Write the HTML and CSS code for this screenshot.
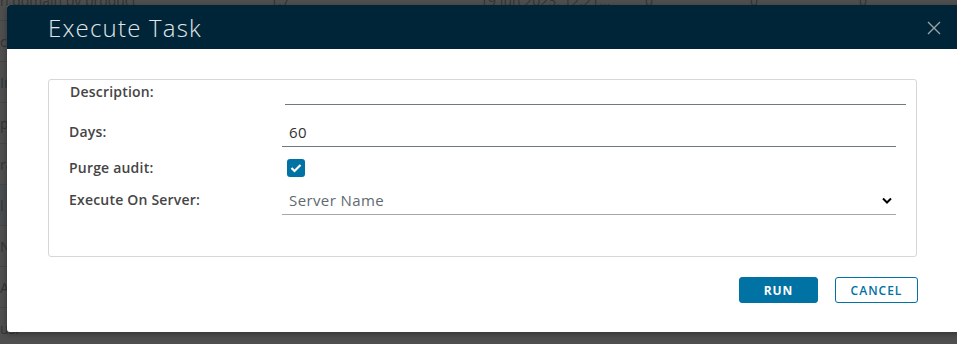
FILE: index.html
```html
<!DOCTYPE html>
<html lang="en">
<head>
  <meta charset="UTF-8" />
  <title>Execute Task</title>
  <link rel="stylesheet" href="styles.css">
</head>
<body>
  <!-- page behind the dialog, dimmed -->
  <div class="backdrop">
    <div class="bg-row"><span class="c1">n domain by product</span><span class="c2">1.7</span><span class="c3">19 Jun 2023, 12:21...</span><span class="c4">0</span><span class="c5">0</span><span class="c6">0</span></div>
    <div class="bg-row"><span class="c1">cleanup</span></div>
    <div class="bg-row"><span class="c1 link">Index</span></div>
    <div class="bg-row"><span class="c1">purge</span></div>
    <div class="bg-row"><span class="c1">rank</span></div>
    <div class="bg-row selected"><span class="c1 link">l</span></div>
    <div class="bg-row"><span class="c1">Notify</span></div>
    <div class="bg-row"><span class="c1">Audit</span></div>
    <div class="bg-row"><span class="c1">usr</span></div>
  </div>

  <div class="modal">
    <div class="modal-header">
      <h3 class="modal-title">Execute Task</h3>
      <button class="close" aria-label="Close">
        <svg width="14" height="14" viewBox="0 0 14 14"><path d="M1 1 L13 13 M13 1 L1 13" stroke="#9aa3a8" stroke-width="1.4" fill="none"/></svg>
      </button>
    </div>
    <div class="modal-body">
      <div class="card">
        <div class="row row-desc">
          <label class="label">Description:</label>
          <div class="field"></div>
        </div>
        <div class="row row-days">
          <label class="label">Days:</label>
          <div class="field">60</div>
        </div>
        <div class="row row-purge">
          <label class="label">Purge audit:</label>
          <div class="check-wrap">
            <span class="checkbox">
              <svg width="12" height="10" viewBox="0 0 12 10"><path d="M1.5 5 L4.5 8 L10.5 2" stroke="#fff" stroke-width="2.2" fill="none"/></svg>
            </span>
          </div>
        </div>
        <div class="row row-server">
          <label class="label">Execute On Server:</label>
          <div class="field select">
            <span class="placeholder">Server Name</span>
            <svg class="caret" width="10" height="7" viewBox="0 0 10 7"><path d="M1 1.5 L5 5.5 L9 1.5" stroke="#000" stroke-width="2" fill="none"/></svg>
          </div>
        </div>
      </div>
      <div class="footer">
        <button class="btn btn-primary">RUN</button>
        <button class="btn btn-outline">CANCEL</button>
      </div>
    </div>
  </div>
</body>
</html>
```

FILE: styles.css
```css
body {
  margin: 0;
  height: 344px;
  background: #4f4f4f;
  font-family: "Open Sans", "Noto Sans", sans-serif;
  overflow: hidden;
  position: relative;
}

/* dimmed page behind */
.backdrop {
  margin-top: -20px;
}
.bg-row {
  height: 40px;
  border-bottom: 1px solid #464646;
  font-size: 14px;
  color: #343434;
  position: relative;
}
.bg-row.selected {
  background: #4a4d50;
}
.bg-row span {
  position: absolute;
  top: 11px;
}
.c1 { left: 0; }
.c2 { left: 270px; }
.c3 { left: 480px; }
.c4 { left: 645px; }
.c5 { left: 750px; }
.c6 { left: 859px; }
.link { color: #2c3740; }

/* dialog */
.modal {
  position: absolute;
  left: 7px;
  top: 5px;
  width: 962px;
  height: 327px;
  background: #fff;
  border-radius: 3px;
  box-shadow: 0 2px 6px rgba(0,0,0,0.35);
}
.modal-header {
  height: 44px;
  background: #002538;
  border-radius: 3px 3px 0 0;
  display: flex;
  align-items: center;
  padding-left: 41px;
}
.modal-title {
  margin: 0;
  font-size: 24px;
  font-weight: 300;
  letter-spacing: 1.2px;
  color: #e2e6e8;
  flex: 1;
}
.close {
  background: none;
  border: none;
  padding: 0;
  margin-right: 28px;
  margin-top: 1px;
  width: 14px;
  height: 14px;
}
.close svg { display: block; }

.modal-body {
  width: 870px;
  margin-left: 41px;
  padding-top: 30px;
}
.card {
  width: 827px;
  height: 176px;
  border: 1px solid #d7d7d7;
  border-radius: 3px;
  padding: 0 20px;
}

.row {
  display: flex;
  align-items: flex-start;
}
.label {
  width: 213px;
  flex: none;
  font-size: 14px;
  line-height: 20px;
  font-weight: 600;
  letter-spacing: 0.2px;
  color: #454545;
}
.field {
  flex: 1;
  height: 20px;
  font-size: 15px;
  line-height: 20px;
  letter-spacing: 0.4px;
  color: #333;
  padding: 0 0 3px 7px;
  border-bottom: 1px solid #6c7b82;
}
.row-desc {
  padding-left: 1px;
  margin-top: 1px;
}
.row-desc .label {
  padding-top: 1px;
}
.row-desc .field {
  margin-left: 2px;
  margin-right: -10px;
}
.row-days {
  margin-top: 17px;
}
.row-days .field {
  padding-bottom: 4px;
}
.row-purge {
  margin-top: 11px;
  align-items: center;
}
.check-wrap {
  padding-left: 5px;
}
.checkbox {
  width: 18px;
  height: 18px;
  border-radius: 3px;
  background: #0072a3;
  display: flex;
  align-items: center;
  justify-content: center;
}
.row-server {
  margin-top: 12px;
}
.select {
  display: flex;
  align-items: center;
  padding-bottom: 4px;
  border-bottom-color: #a3a8ab;
}
.placeholder {
  flex: 1;
  color: #5f6a70;
}
.caret {
  margin-right: 4px;
}

.footer {
  display: flex;
  justify-content: flex-end;
  gap: 17px;
  margin-top: 20px;
}
.btn {
  height: 26px;
  border-radius: 3px;
  font-family: "Open Sans", sans-serif;
  font-size: 12px;
  font-weight: 700;
  letter-spacing: 1px;
  padding: 0;
}
.btn-primary {
  width: 79px;
  background: #0072a3;
  border: 1px solid #0072a3;
  color: #fff;
}
.btn-outline {
  width: 83px;
  background: #fff;
  border: 1px solid #0072a3;
  color: #0072a3;
  font-weight: 600;
}
```
